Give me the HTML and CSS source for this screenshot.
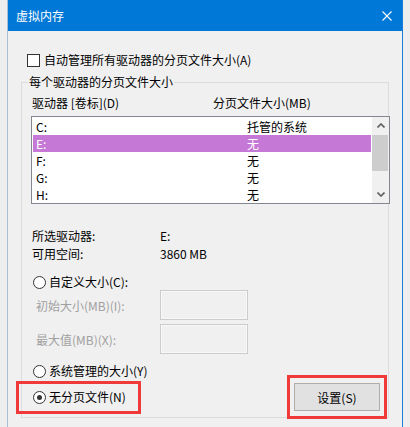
FILE: index.html
```html
<!DOCTYPE html>
<html lang="zh-CN">
<head>
    <meta charset="UTF-8">
    <title>虚拟内存</title>
    <link rel="stylesheet" href="styles.css">
</head>
<body>
    <div class="window">
        <div class="titlebar">
            <span class="title">虚拟内存</span>
            <svg class="close" width="10" height="10" viewBox="0 0 10 10">
                <path d="M0.5 0.5 L9.5 9.5 M9.5 0.5 L0.5 9.5" stroke="#fff" stroke-width="1.1" fill="none"/>
            </svg>
        </div>
        <div class="content">
            <label class="check-row"><span class="checkbox"></span>自动管理所有驱动器的分页文件大小(A)</label>

            <fieldset class="group">
                <legend>每个驱动器的分页文件大小</legend>
                <div class="cols">
                    <span>驱动器 [卷标](D)</span>
                    <span>分页文件大小(MB)</span>
                </div>
                <div class="listbox">
                    <div class="rows">
                        <div class="row"><span>C:</span><span>托管的系统</span></div>
                        <div class="row selected"><span>E:</span><span>无</span></div>
                        <div class="row"><span>F:</span><span>无</span></div>
                        <div class="row"><span>G:</span><span>无</span></div>
                        <div class="row"><span>H:</span><span>无</span></div>
                    </div>
                    <div class="scrollbar">
                        <div class="arrow">
                            <svg width="8" height="5" viewBox="0 0 8 5"><path d="M0.5 4.5 L4 1 L7.5 4.5" stroke="#606060" stroke-width="1.6" fill="none"/></svg>
                        </div>
                        <div class="thumb"></div>
                        <div class="track"></div>
                        <div class="arrow">
                            <svg width="8" height="5" viewBox="0 0 8 5"><path d="M0.5 0.5 L4 4 L7.5 0.5" stroke="#606060" stroke-width="1.6" fill="none"/></svg>
                        </div>
                    </div>
                </div>

                <div class="info">
                    <span>所选驱动器:</span><span>E:</span>
                    <span>可用空间:</span><span>3860 MB</span>
                </div>

                <label class="radio-row first"><span class="radio"></span>自定义大小(C):</label>
                <div class="field">
                    <span>初始大小(MB)(I):</span>
                    <span class="input"></span>
                </div>
                <div class="field second">
                    <span>最大值(MB)(X):</span>
                    <span class="input"></span>
                </div>
                <label class="radio-row system"><span class="radio"></span>系统管理的大小(Y)</label>

                <div class="bottom-row">
                    <label class="radio-row mark"><span class="radio checked"></span>无分页文件(N)</label>
                    <button class="set-btn">设置(S)</button>
                </div>
            </fieldset>
        </div>
    </div>
</body>
</html>
```

FILE: styles.css
```css
body {
    margin: 0;
    background-color: #eeeeee;
    font-family: "Noto Sans CJK SC", "Microsoft YaHei UI", sans-serif;
    font-size: 12px;
    color: #000;
}
.window {
    position: relative;
    width: 394px;
    height: 427px;
    margin-left: 7px;
    background-color: #f0f0f0;
    border-left: 1px solid #a9bdd2;
    border-right: 1px solid #1a7fd6;
}
.titlebar {
    height: 31px;
    display: flex;
    align-items: center;
    justify-content: space-between;
    padding: 0 10px 0 8px;
    background-color: #0078d7;
    color: #fff;
    line-height: 14px;
}
.close {
    display: block;
}
.content {
    padding-top: 22px;
}
.check-row {
    display: flex;
    align-items: center;
    gap: 4px;
    height: 14px;
    margin-left: 19px;
    line-height: 14px;
}
.checkbox {
    width: 11px;
    height: 11px;
    border: 1px solid #333;
    background-color: #fff;
}
.group {
    margin: 7px 13px 0 13px;
    padding: 5px 8px 6px 9px;
    border: 1px solid #dcdcdc;
    min-width: 0;
}
.group legend {
    margin-left: -3px;
    padding: 0 1px;
    line-height: 16px;
}
.cols {
    display: grid;
    grid-template-columns: 181px 1fr;
    padding-left: 1px;
    line-height: 16px;
}
.listbox {
    display: flex;
    width: 357px;
    height: 86px;
    margin-top: 5px;
    border: 1px solid #828790;
    background-color: #fff;
}
.rows {
    width: 338px;
    padding: 1px 0 0 1px;
}
.row {
    display: grid;
    grid-template-columns: 211px 1fr;
    height: 17px;
    padding-left: 3px;
    line-height: 17px;
}
.row.selected {
    background-color: #c678d6;
    color: #fff;
}
.scrollbar {
    display: flex;
    flex-direction: column;
    width: 17px;
    margin-left: 1px;
    background-color: #f0f0f0;
}
.arrow {
    height: 17px;
    display: flex;
    align-items: center;
    justify-content: center;
}
.thumb {
    height: 36px;
    margin: 1px 1px 0 0;
    background-color: #cdcdcd;
}
.track {
    flex: 1;
}
.info {
    display: grid;
    grid-template-columns: 128px 1fr;
    margin-top: 23px;
    padding-left: 1px;
    line-height: 18px;
}
.radio-row {
    display: flex;
    align-items: center;
    gap: 3px;
    height: 16px;
    padding-left: 2px;
    line-height: 16px;
}
.radio-row.first {
    margin-top: 11px;
}
.radio-row.system {
    margin-top: 9px;
}
.radio {
    position: relative;
    width: 11px;
    height: 11px;
    border: 1px solid #333;
    border-radius: 50%;
    background-color: #fff;
}
.radio.checked::after {
    content: "";
    position: absolute;
    left: 3px;
    top: 3px;
    width: 5px;
    height: 5px;
    border-radius: 50%;
    background-color: #333;
}
.field {
    display: grid;
    grid-template-columns: 124px 88px;
    align-items: center;
    height: 30px;
    padding-left: 5px;
    color: #a0a0a0;
}
.field.second {
    margin-top: 4px;
}
.input {
    height: 28px;
    border: 1px solid #cccccc;
    box-shadow: inset 0 0 0 1px #f8f8f8;
}
.bottom-row {
    display: flex;
    align-items: center;
    justify-content: space-between;
    margin-top: 4px;
}
.mark {
    position: relative;
}
.mark::after {
    content: "";
    position: absolute;
    left: -15px;
    top: -8px;
    width: 119px;
    height: 27px;
    border: 3px solid #f03a3a;
}
.set-btn {
    position: relative;
    width: 86px;
    height: 28px;
    padding: 0;
    border: 1px solid #adadad;
    background-color: #e1e1e1;
    font-family: inherit;
    font-size: 12px;
    color: #000;
}
.set-btn::after {
    content: "";
    position: absolute;
    left: -8px;
    right: -8px;
    top: -9px;
    bottom: -9px;
    border: 3px solid #f03a3a;
}
```
